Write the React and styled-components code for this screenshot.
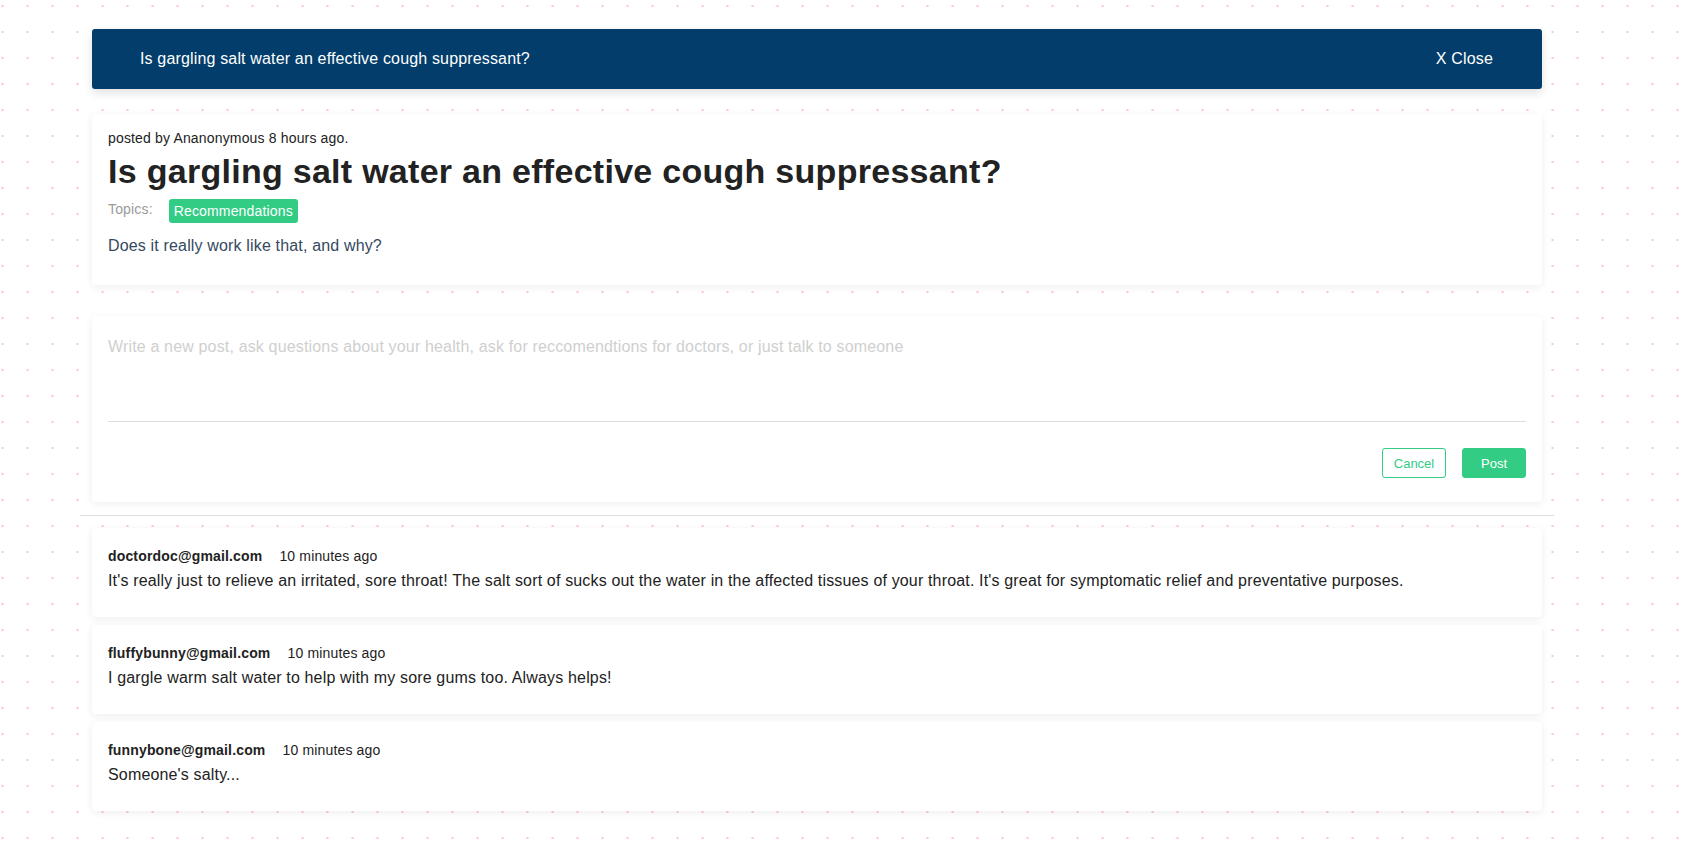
import React from "react";
import styled, { createGlobalStyle } from "styled-components";

const GlobalStyle = createGlobalStyle`
  html, body {
    margin: 0;
    padding: 0;
  }
  body {
    font-family: "Liberation Sans", Arial, sans-serif;
    letter-spacing: 0.16px;
    background-color: #ffffff;
    background-image: radial-gradient(circle, #f7c3d3 0.9px, transparent 1.3px);
    background-size: 25px 26px;
    background-position: -10px -7px;
    min-height: 841px;
  }
`;

const comments = [
  {
    author: "doctordoc@gmail.com",
    time: "10 minutes ago",
    text:
      "It's really just to relieve an irritated, sore throat! The salt sort of sucks out the water in the affected tissues of your throat. It's great for symptomatic relief and preventative purposes.",
  },
  {
    author: "fluffybunny@gmail.com",
    time: "10 minutes ago",
    text: "I gargle warm salt water to help with my sore gums too. Always helps!",
  },
  {
    author: "funnybone@gmail.com",
    time: "10 minutes ago",
    text: "Someone's salty...",
  },
];

const App = () => {
  return (
    <>
      <GlobalStyle />
      <Page>
        <TopBar>
          <TopTitle>Is gargling salt water an effective cough suppressant?</TopTitle>
          <CloseButton>X Close</CloseButton>
        </TopBar>

        <PostCard>
          <PostedBy>posted by Ananonymous 8 hours ago.</PostedBy>
          <PostTitle>Is gargling salt water an effective cough suppressant?</PostTitle>
          <TopicsRow>
            <TopicsLabel>Topics:</TopicsLabel>
            <TopicPill>Recommendations</TopicPill>
          </TopicsRow>
          <PostBody>Does it really work like that, and why?</PostBody>
        </PostCard>

        <ComposerCard>
          <Composer placeholder="Write a new post, ask questions about your health, ask for reccomendtions for doctors, or just talk to someone" />
          <ButtonRow>
            <Button>Cancel</Button>
            <Button primary>Post</Button>
          </ButtonRow>
        </ComposerCard>

        <Divider />

        <CommentList>
          {comments.map((c) => (
            <CommentCard key={c.author}>
              <CommentMeta>
                <Author>{c.author}</Author>
                <Time>{c.time}</Time>
              </CommentMeta>
              <CommentText>{c.text}</CommentText>
            </CommentCard>
          ))}
        </CommentList>
      </Page>
    </>
  );
};

export default App;

/* Styled Components */
const Page = styled.div`
  width: 1450px;
  margin-left: 92px;
  padding-top: 29px;
  padding-bottom: 30px;
  display: flex;
  flex-direction: column;
`;

const TopBar = styled.div`
  height: 60px;
  background: #023d6b;
  border-radius: 3px;
  display: flex;
  align-items: center;
  justify-content: space-between;
  padding: 0 49px 0 48px;
  color: #ffffff;
  font-size: 16px;
  box-shadow: 0px 4px 10px rgba(0, 0, 0, 0.12);
`;

const TopTitle = styled.div``;

const CloseButton = styled.div`
  cursor: pointer;
`;

const Card = styled.div`
  background: #ffffff;
  border-radius: 4px;
  box-shadow: 0px 2px 8px rgba(0, 0, 0, 0.07);
`;

const PostCard = styled(Card)`
  margin-top: 25px;
  padding: 16px 16px 29px;
  display: flex;
  flex-direction: column;
`;

const PostedBy = styled.div`
  font-size: 14px;
  line-height: 17px;
  color: #222;
`;

const PostTitle = styled.h1`
  margin: 4px 0 0;
  font-size: 34px;
  line-height: 40px;
  font-weight: bold;
  letter-spacing: 0.28px;
  color: #222;
`;

const TopicsRow = styled.div`
  display: flex;
  align-items: center;
  gap: 16px;
  margin-top: 8px;
`;

const TopicsLabel = styled.span`
  font-size: 14px;
  color: #9a9a9a;
  position: relative;
  top: -2px;
`;

const TopicPill = styled.span`
  background: #33cc85;
  color: #fff;
  font-size: 14px;
  height: 24px;
  line-height: 24px;
  padding: 0 5px;
  border-radius: 3px;
`;

const PostBody = styled.p`
  margin: 13px 0 0;
  font-size: 16px;
  line-height: 20px;
  color: #34495e;
`;

const ComposerCard = styled(Card)`
  margin-top: 31px;
  padding: 21px 16px 24px;
  display: flex;
  flex-direction: column;
`;

const Composer = styled.textarea`
  height: 84px;
  border: none;
  border-bottom: 1px solid #dcdcdc;
  resize: none;
  outline: none;
  padding: 0;
  font-family: "Liberation Sans", Arial, sans-serif;
  letter-spacing: 0.16px;
  font-size: 16px;
  line-height: 20px;
  color: #333;

  &::placeholder {
    color: #cfcfcf;
  }
`;

const ButtonRow = styled.div`
  display: flex;
  justify-content: flex-end;
  gap: 16px;
  margin-top: 26px;
`;

const Button = styled.button`
  width: 64px;
  height: 30px;
  border-radius: 3px;
  border: 1px solid #33cc85;
  background: ${({ primary }) => (primary ? "#33cc85" : "#ffffff")};
  color: ${({ primary }) => (primary ? "#ffffff" : "#33cc85")};
  font-family: "Liberation Sans", Arial, sans-serif;
  font-size: 13px;
  cursor: pointer;
  padding: 0;
`;

const Divider = styled.hr`
  margin: 13px -12px 12px;
  border: none;
  border-top: 1px solid #dedede;
  height: 0;
`;

const CommentList = styled.div`
  display: flex;
  flex-direction: column;
  gap: 8px;
`;

const CommentCard = styled(Card)`
  padding: 19px 16px 25px;
  min-height: 89px;
  box-sizing: border-box;
`;

const CommentMeta = styled.div`
  display: flex;
  align-items: baseline;
  gap: 17px;
  font-size: 14px;
  line-height: 18px;
  color: #222;
`;

const Author = styled.span`
  font-weight: bold;
`;

const Time = styled.span``;

const CommentText = styled.div`
  margin-top: 5px;
  font-size: 16px;
  line-height: 22px;
  color: #222;
`;
